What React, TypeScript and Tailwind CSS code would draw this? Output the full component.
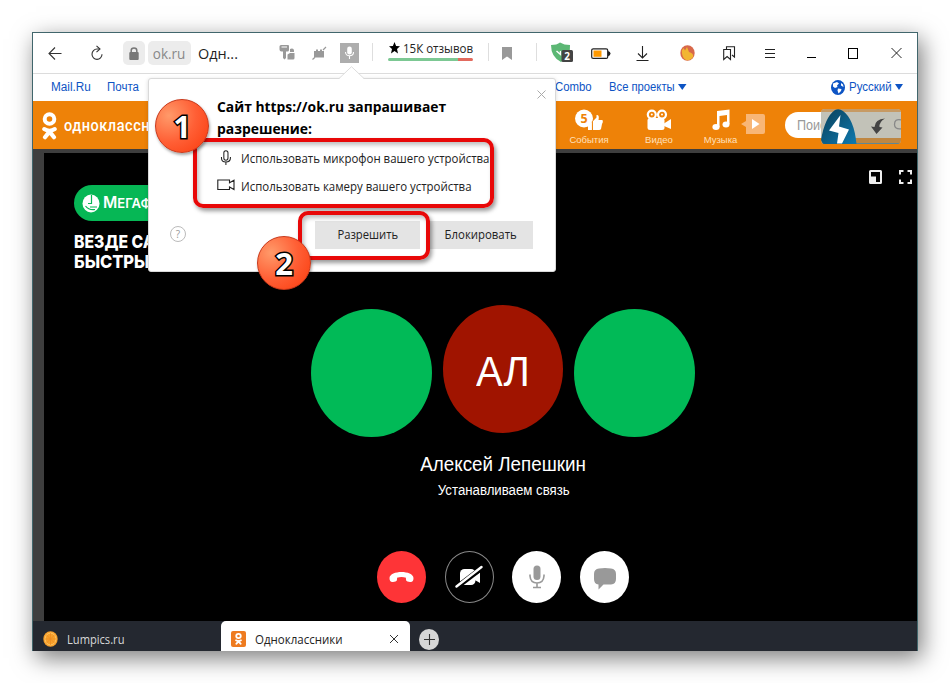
import React from 'react';

const SEGOE = "font-['Open_Sans','Noto_Sans',sans-serif]";
const ARIAL = "font-['Liberation_Sans',Arial,sans-serif]";

interface IconProps {
  className?: string;
}

const OkMan: React.FC<IconProps> = ({ className }) => (
  <svg viewBox="0 0 15 28" preserveAspectRatio="none" className={className} fill="none" stroke="currentColor" strokeLinecap="round">
    <circle cx="7.5" cy="7" r="4.8" strokeWidth="4" />
    <path d="M2.2 17 Q7.5 20.4 12.8 17" strokeWidth="4" />
    <path d="M7.5 19.6 L3 25.2 M7.5 19.6 L12 25.2" strokeWidth="4.2" />
  </svg>
);

const MicLine: React.FC<IconProps> = ({ className }) => (
  <svg viewBox="0 0 12 17" className={className} fill="none" stroke="currentColor" strokeWidth="1.1">
    <rect x="3.7" y="0.8" width="4.4" height="10" rx="2.2" />
    <path d="M1.2 7.5 V8.5 C1.2 11.3 3.2 12.8 5.9 12.8 C8.6 12.8 10.7 11.3 10.7 8.5 V7.5 M5.9 12.8 V16" />
  </svg>
);

const Divider = () => <div className="mt-[10px] h-[18px] w-px shrink-0 bg-[#dedede]" />;

const Toolbar = () => (
  <div className={`flex h-[41px] shrink-0 items-start border-b border-[#dcdcdc] bg-white text-[#222] ${SEGOE}`}>
    <div className="w-[58px] pt-[13px] pl-[15px]">
      <svg width="15" height="14" fill="none" stroke="#333" strokeWidth="1.1">
        <path d="M13.5 7.5 H1.2 M7 1.5 L1 7.5 L7 13.5" />
      </svg>
    </div>
    <div className="w-8 pt-[12px]">
      <svg width="13" height="17" fill="none" stroke="#333" strokeWidth="1.1">
        <path d="M8.3 4 H6 A5 5.2 0 1 0 11 9.2" />
        <path d="M5.5 0.8 L9 4 L5.5 7.2" />
      </svg>
    </div>
    <div className="mt-2 flex h-6 w-[22px] shrink-0 items-center justify-center rounded-[5px] bg-[#ececec]">
      <svg width="10" height="13" fill="none">
        <rect x="0.3" y="5" width="9.4" height="8" rx="1" fill="#777" />
        <path d="M2.2 5.5 V3.6 C2.2 0.2 7.8 0.2 7.8 3.6 V5.5" stroke="#777" strokeWidth="1.5" />
      </svg>
    </div>
    <div className="mt-2 ml-[3px] flex h-6 w-[43px] shrink-0 items-center justify-center rounded-[5px] bg-[#ececec] text-[15px] text-[#888]">
      <span className="scale-x-[.9]">ok.ru</span>
    </div>
    <div className="w-[88px] shrink-0 pt-2 pl-[7px] text-[15px] leading-6 whitespace-nowrap">
      <span className="inline-block origin-left scale-x-[.96]">Одн...</span>
    </div>
    <div className="w-[33px] shrink-0 pt-[11px]">
      <svg width="17" height="18" fill="#999">
        <path d="M2 1 H9 Q10 1 10 2 V6 Q10 7.5 8.5 7.5 H7 V14 L5.5 15.5 L4 14 V7.5 H2.5 Q0.5 7.5 0.5 5.5 V2.5 Q0.5 1 2 1Z" />
        <path d="M2.5 3 H8" stroke="#fff" strokeWidth="1" />
        <path d="M11 5 C14 3.5 15.5 5.5 15 8 H11 Z M8.5 10.5 L11 9 H15.5 V14 Q15.5 15.5 14 15.5 H8.5Z" />
      </svg>
    </div>
    <div className="w-7 shrink-0 pt-[13px]">
      <svg width="15" height="15" fill="#999">
        <path d="M2 5 H4 V3.5 H6 V5 H8 V3.5 H10 V5 H12 V11.5 H2Z" />
        <path d="M0.5 13.5 L3 11.2 M11 4 L14 1" stroke="#999" strokeWidth="1.2" />
      </svg>
    </div>
    <div className="mt-[10px] flex h-5 w-[19px] shrink-0 items-center justify-center bg-[#adadad]">
      <svg width="11" height="14" fill="none" stroke="#fff" strokeWidth="1.1">
        <rect x="3.2" y="0.5" width="4.6" height="8" rx="2.3" fill="#fff" stroke="none" />
        <path d="M1.5 6 C1.5 11 9.5 11 9.5 6 M5.5 9.8 V13" />
      </svg>
    </div>
    <div className="w-[13px] shrink-0" />
    <Divider />
    <div className="ml-[15px] w-[85px] shrink-0 pt-[7px]">
      <div className="flex h-[16px] items-center whitespace-nowrap">
        <svg width="11" height="12" viewBox="0 0 11 12" className="mr-[3px] ml-[1px] shrink-0">
          <path d="M5.5 0 L7.1 4 L11 4.3 L8 7 L9 11.5 L5.5 9 L2 11.5 L3 7 L0 4.3 L3.9 4Z" />
        </svg>
        <span className="inline-block origin-left scale-x-[.96] pt-px text-[12px]">15К отзывов</span>
      </div>
      <div className="mt-[2px] flex h-[3px] overflow-hidden rounded-sm">
        <div className="w-[70px] bg-[#7cc893]" />
        <div className="flex-1 bg-[#e26a5e]" />
      </div>
    </div>
    <div className="w-[15px] shrink-0" />
    <Divider />
    <svg width="10" height="14" className="mt-[14px] ml-[13px] shrink-0">
      <path d="M0 0 H10 V13 L5 9.5 L0 13Z" fill="#999" />
    </svg>
    <div className="w-6 shrink-0" />
    <Divider />
    <svg width="23" height="21" className="mt-[9px] ml-[14px] shrink-0">
      <path d="M0 3 Q6 3 9 0.5 Q13 3 19 3 Q20 14 10 20 Q0 15 0 3Z" fill="#5cb774" />
      <path d="M5.5 9 L9.5 12.5 V9" stroke="#fff" strokeWidth="1.4" fill="none" />
      <rect x="10.5" y="8" width="11.5" height="12" rx="1.5" fill="#444" />
      <text x="13.2" y="17.8" fill="#fff" fontSize="10" fontWeight="700" fontFamily="Open Sans">2</text>
    </svg>
    <svg width="20" height="12" className="mt-[15px] ml-[17px] shrink-0">
      <rect x="0.7" y="0.8" width="16" height="9.6" rx="1.5" fill="none" stroke="#222" strokeWidth="1.2" />
      <rect x="2.5" y="2.5" width="8" height="6.3" fill="#f90" />
      <path d="M17 3 Q19.5 3.5 19.5 5.6 Q19.5 7.8 17 8.2Z" fill="#222" />
    </svg>
    <svg width="14" height="16" className="mt-[13px] ml-[25px] shrink-0" fill="none" stroke="#222" strokeWidth="1.1">
      <path d="M6.5 0 V12 M2 7.5 L6.5 12 L11 7.5 M0.5 14.5 H12.5" />
    </svg>
    <svg width="15" height="16" className="mt-3 ml-[30px] shrink-0">
      <ellipse cx="7.5" cy="8" rx="7.2" ry="7.8" fill="#d8684a" />
      <path d="M1.8 5.5 L3.5 3 L5 5.5 L7 2 L9 7 Q13.5 8 13.2 11.5 Q11 15.6 6.5 15.2 Q1.8 13.5 1.8 5.5Z" fill="#f2b632" />
    </svg>
    <svg width="13" height="15" className="mt-[13px] ml-[28px] shrink-0" fill="none" stroke="#222" strokeWidth="1.1">
      <path d="M0.7 3.5 H7.5 V13.5 L4.1 10.5 L0.7 13.5Z" />
      <path d="M3.5 3.3 V0.8 H11.5 V11 L9 9" />
    </svg>
    <svg width="10" height="10" className="mt-4 ml-[29px] shrink-0" stroke="#222" strokeWidth="1">
      <path d="M0 0.5 H10 M0 4.5 H10 M0 8.5 H10" />
    </svg>
    <div className="mt-[24px] ml-[32px] h-px w-[9px] shrink-0 bg-black" />
    <div className="mt-[15px] ml-[32px] h-[11px] w-[10px] shrink-0 border border-black" />
    <svg width="11" height="12" className="mt-[14px] ml-[33px] shrink-0" stroke="#222" strokeWidth="1">
      <path d="M0.5 1 L10.5 11 M10.5 1 L0.5 11" />
    </svg>
  </div>
);

const NavRow = () => (
  <div className={`flex h-[27px] shrink-0 items-center bg-white pb-px pl-[18px] text-[12.5px] text-[#0d54c4] ${ARIAL}`}>
    <div className="w-14"><span className="inline-block origin-left scale-x-[.94]">Mail.Ru</span></div>
    <div className="w-[448px]"><span className="inline-block origin-left scale-x-[.92]">Почта</span></div>
    <div className="w-[54px]"><span className="inline-block origin-left scale-x-[.91]">Combo</span></div>
    <div className="w-[69px] whitespace-nowrap"><span className="inline-block origin-left scale-x-[.9]">Все проекты</span></div>
    <svg width="9" height="6"><path d="M0 0 H8.5 L4.25 6Z" fill="currentColor" /></svg>
    <svg width="14" height="15" className="ml-[144px]">
      <ellipse cx="7" cy="7.5" rx="7" ry="7.5" fill="#0d54c4" />
      <path d="M2 3.5 L6 2 L8 3.5 L6 5.5 L6.5 7 L4 8 L2 6.5Z M7 8.5 L10.5 9 L10 11 L7.5 13.5 L6.5 10.5Z M10 3 L12 4.5 L12.5 7 L10 5.5Z" fill="#fff" />
    </svg>
    <div className="ml-[4px] w-[46px]"><span className="inline-block origin-left scale-x-[.92]">Русский</span></div>
    <svg width="8" height="6"><path d="M0 0 H8 L4 6Z" fill="currentColor" /></svg>
  </div>
);

const SiteHeader = () => (
  <div className={`flex h-12 shrink-0 items-start bg-[#ee8208] text-white ${ARIAL}`}>
    <OkMan className="mt-[11px] ml-[9px] h-7 w-[15px] shrink-0" />
    <div className="w-[496px] shrink-0 pt-[13px] pl-[7px] font-['Roboto',sans-serif] text-[16.5px] leading-6 font-medium tracking-[.6px]">
      <span className="inline-block origin-left scale-x-[.88]">одноклассн</span>
    </div>
    <div className="flex w-[72px] shrink-0 flex-col items-center pt-[8px] text-[9.5px] text-[#ffe0bc]">
      <svg width="30" height="22" className="text-white" fill="currentColor">
        <circle cx="10" cy="9.5" r="9" />
        <path d="M14 14 H18 V21 H14Z M18.7 12.5 L22.5 8.5 V6 Q25 5.5 24.8 9 L24.5 11 H28.5 Q29.5 13 28 15 L27 20 Q26.5 21 25 21 H19Z" />
        <path d="M18.4 12 V21.5" stroke="#ee8208" strokeWidth="0.8" />
        <text x="6.6" y="13.8" fill="#ee8208" fontSize="12.5" fontWeight="700" fontFamily="Open Sans">5</text>
      </svg>
      <span className="mt-[3px] leading-3">События</span>
    </div>
    <div className="ml-[2px] flex w-[64px] shrink-0 flex-col items-center pt-[8px] text-[9.5px] text-[#ffe0bc]">
      <svg width="26" height="22" className="text-white" fill="currentColor">
        <rect x="1.5" y="9" width="17" height="12" rx="2.5" />
        <path d="M18 14.5 L25 10 V20 L18 17Z" />
        <g stroke="#fff" strokeWidth="2.2" fill="#ee8208">
          <circle cx="5.8" cy="5.6" r="4" />
          <circle cx="16" cy="5.6" r="4" />
        </g>
        <circle cx="5.8" cy="5.6" r="1" />
        <circle cx="16" cy="5.6" r="1" />
      </svg>
      <span className="mt-[3px] leading-3">Видео</span>
    </div>
    <div className="-ml-px flex w-[61px] shrink-0 flex-col items-center pt-[8px] text-[9.5px] text-[#ffe0bc]">
      <svg width="18" height="22" className="text-white" fill="currentColor">
        <path d="M5 2 L17.5 0.5 V15 H15 V6 L7.5 7 V18 H5Z" />
        <ellipse cx="4" cy="18" rx="3.6" ry="3" />
        <ellipse cx="14" cy="15.5" rx="3.5" ry="3" />
      </svg>
      <span className="mt-[3px] leading-3">Музыка</span>
    </div>
    <svg width="25" height="20" className="mt-[13px] -ml-[10px] shrink-0">
      <path d="M5 0 H22 Q24 0 24 2 V18 Q24 20 22 20 H5 V13 L0 10 L5 7Z" fill="#f8b676" />
      <path d="M11 5 L18.5 10 L11 15Z" fill="#fff" />
    </svg>
    <div className="relative mt-[11px] ml-[19px] h-[26px] w-[116px] shrink-0 rounded-l-full bg-white pl-[12px] text-[14px] leading-[26px] text-[#999]">
      <span className="inline-block origin-left scale-x-[.9]">Поис</span>
      <div className="absolute -top-[3px] left-[36px] h-[35px] w-20 overflow-hidden rounded-[4px] bg-[#c2c2b8]">
        <div className="absolute bottom-0 h-[6px] w-full border-b border-[#5e8795] bg-[#bf8742]" />
        <div className="absolute top-0 h-[3px] w-full bg-[#c69a64]" />
        <svg width="80" height="35" className="absolute">
          <defs>
            <linearGradient id="peak" x1="0" y1="0" x2="1" y2="1">
              <stop offset="0" stopColor="#0a3f58" />
              <stop offset="1" stopColor="#0f7ab0" />
            </linearGradient>
          </defs>
          <path d="M0 31 Q4 8 14 1 Q18 -1 22 2 Q33 10 35.5 35 H2Z" fill="url(#peak)" />
          <path d="M19.5 6 L8 21.5 L17.5 24 L16 34.5 H21 L28 20.5 L18 17.5Z" fill="#fff" />
          <path d="M64 9.5 Q54 10 53.5 18 L50 17.5 L55.5 25 L61.5 18.5 L58.5 18 Q58 13 64 9.5Z" fill="#444" />
          <path d="M80 10.8 Q73.5 9.5 73.5 15.5 Q73.5 20.5 80 19.8" fill="none" stroke="#888" strokeWidth="1.3" />
        </svg>
      </div>
    </div>
  </div>
);

const CallScreen = () => (
  <div className={`relative h-[468px] w-full overflow-hidden bg-black text-white ${ARIAL}`}>
    <div className="absolute top-8 left-[30px] flex h-9 w-[150px] items-center rounded-full bg-[#06b755] pl-2">
      <svg width="18" height="19">
        <ellipse cx="9" cy="9.5" rx="8.5" ry="9" fill="#fff" />
        <path d="M9.5 1 V9.5 H6 M8 13 H15 M3.5 12 Q7 16.5 13 15.5" fill="none" stroke="#06b755" strokeWidth="1.2" />
      </svg>
      <span className="ml-[3px] font-['Inter',sans-serif] text-[15.5px] font-semibold">М<span className="text-[13px]">ЕГАФ</span></span>
    </div>
    <div className="absolute top-[79px] left-[30px] font-['Inter',sans-serif] text-[17.5px] leading-5 font-extrabold whitespace-nowrap">
      <div className="origin-left scale-x-[.9]">ВЕЗДЕ СА</div>
      <div className="origin-left scale-x-[.94]">БЫСТРЫ</div>
    </div>
    <div className="absolute top-[17px] right-[5px] flex gap-[17px]">
      <svg width="13" height="14">
        <rect x="1" y="1" width="11" height="12" rx="0.5" fill="none" stroke="#eee" strokeWidth="2" />
        <rect x="1" y="6.5" width="6" height="7" fill="#eee" />
      </svg>
      <svg width="13" height="14" fill="none" stroke="#eee" strokeWidth="2">
        <path d="M1 4.5 V1 H4.5 M8.5 1 H12 V4.5 M12 9.5 V13 H8.5 M4.5 13 H1 V9.5" />
      </svg>
    </div>
    <div className="flex items-start justify-center gap-[11px] pt-[152px] pl-[45px]">
      <div className="mt-1 h-32 w-[120.5px] rounded-[50%] bg-[#01ba57]" />
      <div className="flex h-32 w-[120.5px] items-center justify-center rounded-[50%] bg-[#a01400] text-[43px]">
        <span className="mt-[4px] scale-x-[.93]">АЛ</span>
      </div>
      <div className="mt-1 h-32 w-[120.5px] rounded-[50%] bg-[#01ba57]" />
    </div>
    <div className="flex flex-col items-center pt-[13px] pl-[46px]">
      <div className="scale-x-[.94] text-[20px] leading-7">Алексей Лепешкин</div>
      <div className="mt-[2px] scale-x-[.945] text-[14px] leading-5">Устанавливаем связь</div>
    </div>
    <div className="flex justify-center gap-[18.7px] pt-[51px] pl-[45px]">
      <div className="flex h-[52px] w-[49px] items-center justify-center rounded-[50%] bg-[#fe3437]">
        <svg width="25" height="12">
          <path d="M0.5 7 C1 -1 24 -1 24.5 7 Q24.5 11.5 21 11 L18.5 10.5 Q16.5 10 17 6.8 Q12.5 5 8 6.8 Q8.5 10 6.5 10.5 L4 11 Q0.5 11.5 0.5 7Z" fill="#fff" />
        </svg>
      </div>
      <div className="flex h-[52px] w-[49px] items-center justify-center rounded-[50%] border border-[#888]">
        <svg width="28" height="24">
          <rect x="5" y="4" width="15.5" height="16" rx="4.5" fill="#fff" />
          <path d="M19 11.5 L25 7.5 V18 L19 14.5Z" fill="#fff" />
          <path d="M0 23.5 L27.5 2.500" stroke="#000" strokeWidth="5" />
          <path d="M1.5 21.5 L26.5 2" stroke="#fff" strokeWidth="2.4" strokeLinecap="round" />
        </svg>
      </div>
      <div className="flex h-[52px] w-[49px] items-center justify-center rounded-[50%] bg-white">
        <svg width="16" height="24" fill="none" stroke="#999" strokeWidth="1.6">
          <rect x="4.5" y="0.5" width="7" height="14.5" rx="3.5" fill="#999" stroke="none" />
          <path d="M1 9.5 V11 Q1.5 18 8 18 Q14.5 18 15 11 V9.5 M8 18 V22 M4 22.5 H12" />
        </svg>
      </div>
      <div className="flex h-[52px] w-[49px] items-center justify-center rounded-[50%] bg-white">
        <svg width="22" height="22" className="mt-[3px]">
          <path d="M5 0.5 Q11 -0.5 17 0.5 Q22 1 22 6 V11 Q22 16 17 16.5 H9.5 L4.5 21.5 V16.5 Q0 16 0 11 V6 Q0 1 5 0.5Z" fill="#999" />
        </svg>
      </div>
    </div>
  </div>
);

const TabBar = () => (
  <div className={`flex h-[30px] shrink-0 items-center bg-[#242830] text-[12.5px] ${SEGOE}`}>
    <svg width="15" height="16" className="mt-[5px] ml-[10px] shrink-0">
      <ellipse cx="7.5" cy="8" rx="7.2" ry="7.7" fill="#f8a12c" />
      <ellipse cx="7.5" cy="8" rx="5.4" ry="5.9" fill="none" stroke="#ffd27a" strokeWidth="0.7" />
      <path d="M7.5 2 V14 M2.2 8 H13 M3.5 4 L11.5 12 M11.5 4 L3.5 12" stroke="#ec8a20" strokeWidth="0.7" />
    </svg>
    <div className="w-[154px] shrink-0 pt-[8px] pl-[9px] text-[#d8d8d8]">
      <span className="inline-block origin-left scale-x-[.89]">Lumpics.ru</span>
    </div>
    <div className="ml-[9px] flex h-full w-[189px] shrink-0 items-center rounded-t-[5px] bg-white pt-[5px] pl-[10px] text-[#222]">
      <div className="flex h-4 w-[15px] shrink-0 items-center justify-center rounded-[2px] bg-[#ee7b20] text-white">
        <OkMan className="h-3 w-[7px]" />
      </div>
      <div className="ml-[9px] w-[134px] pt-[3px]"><span className="inline-block origin-left scale-x-[.92]">Одноклассники</span></div>
      <svg width="10" height="10" stroke="#333" strokeWidth="1"><path d="M1 1 L9 9 M9 1 L1 9" /></svg>
    </div>
    <div className="mt-[6px] ml-[9px] flex h-[21px] w-5 items-center justify-center rounded-[50%] bg-[#d6d6d6]">
      <svg width="11" height="11" stroke="#333" strokeWidth="1.1"><path d="M5.5 0 V11 M0 5.5 H11" /></svg>
    </div>
  </div>
);

const Badge: React.FC<{ n: string; className: string }> = ({ n, className }) => (
  <div className={`absolute flex h-[54px] w-[54px] items-center justify-center rounded-full border border-[#c9381a] bg-[radial-gradient(circle_at_25%_30%,#ff9a6a,#ff5f35_50%,#fa3a0c)] shadow-[1px_2px_3px_rgba(0,0,0,.35)] ${className}`}>
    <span className="font-['Noto_Sans',sans-serif] text-[31px] leading-none font-bold text-white [-webkit-text-stroke:3px_black] [paint-order:stroke_fill]">{n}</span>
  </div>
);

const PermissionDialog = () => (
  <div className={`absolute top-[45px] left-[115px] h-[194px] w-[408px] rounded-[3px] border border-[#d9d9d9] bg-white text-black shadow-[0_1px_4px_rgba(0,0,0,.15)] ${SEGOE}`}>
    <svg width="26" height="14" className="absolute -top-[13px] left-[190px]">
      <path d="M0 13 L12.5 0.5 L25 13 V14 H0Z" fill="#fff" />
      <path d="M0 12.5 L12.5 0.7 L25 12.5" fill="none" stroke="#ddd" />
    </svg>
    <svg width="9" height="9" className="absolute top-[11px] right-[9px]" stroke="#aaa"><path d="M0.5 0.5 L8.5 8.5 M8.5 0.5 L0.5 8.5" /></svg>
    <div className="h-[61px] pt-[16px] pl-[68px] text-[15px] leading-[22px] font-bold whitespace-nowrap">
      <div className="origin-left scale-x-[.923]">Сайт https://ok.ru запрашивает</div>
      <div className="origin-left scale-x-[.927]">разрешение:</div>
    </div>
    <div className="flex h-7 items-center pt-[8px] pl-[71px] text-[13px] whitespace-nowrap text-[#222]">
      <MicLine className="h-4 w-3 shrink-0" />
      <span className="mt-[2px] ml-[9px] origin-left scale-x-[.88]">Использовать микрофон вашего устройства</span>
    </div>
    <div className="flex h-7 items-center pt-[8px] pl-[68px] text-[13px] whitespace-nowrap text-[#222]">
      <svg width="18" height="12" fill="none" stroke="currentColor" strokeWidth="1.1" className="-mt-[3px] shrink-0">
        <path d="M0.8 1 H12.5 V3.8 L17 1.2 V10.5 L12.5 8 V10.5 H0.8Z" />
      </svg>
      <span className="mt-[2px] ml-[6px] origin-left scale-x-[.88]">Использовать камеру вашего устройства</span>
    </div>
    <div className="flex pt-[25px] pl-[21px] text-[12.5px] text-[#222]">
      <div className="mt-[5px] flex h-4 w-4 items-center justify-center rounded-full border border-[#bbb] text-[10px] text-[#999]">?</div>
      <div className="ml-[129px] flex h-7 w-[105px] items-center justify-center bg-[#e4e4e4]"><span className="scale-x-[.9]">Разрешить</span></div>
      <div className="ml-2 flex h-7 w-[105px] items-center justify-center bg-[#e4e4e4]"><span className="scale-x-[.91]">Блокировать</span></div>
    </div>
    <div className="absolute top-[59px] left-[44px] h-[70px] w-[301px] rounded-[10px] border-4 border-[#e80808] shadow-[2px_3px_4px_rgba(0,0,0,.4),inset_2px_3px_4px_rgba(0,0,0,.25)]" />
    <div className="absolute top-[132px] left-[149px] h-[49px] w-[132px] rounded-[10px] border-4 border-[#e80808] shadow-[2px_3px_4px_rgba(0,0,0,.4),inset_2px_3px_4px_rgba(0,0,0,.25)]" />
    <Badge n="1" className="top-[20px] left-[6px]" />
    <Badge n="2" className="top-[157px] left-[108px]" />
  </div>
);

const App = () => {
  return (
    <div className="h-[683px] w-[950px] overflow-hidden bg-white pt-8 pl-8">
      <div className="relative flex h-[619px] w-[886px] flex-col border border-b-0 border-[#41666c] shadow-[4px_7px_22px_rgba(0,0,0,.52)]">
        <Toolbar />
        <NavRow />
        <SiteHeader />
        <div className="h-[472px] shrink-0 bg-[#3e3e3e] pt-1 pl-[11px]">
          <CallScreen />
        </div>
        <TabBar />
        <PermissionDialog />
      </div>
    </div>
  );
};

export default App;
